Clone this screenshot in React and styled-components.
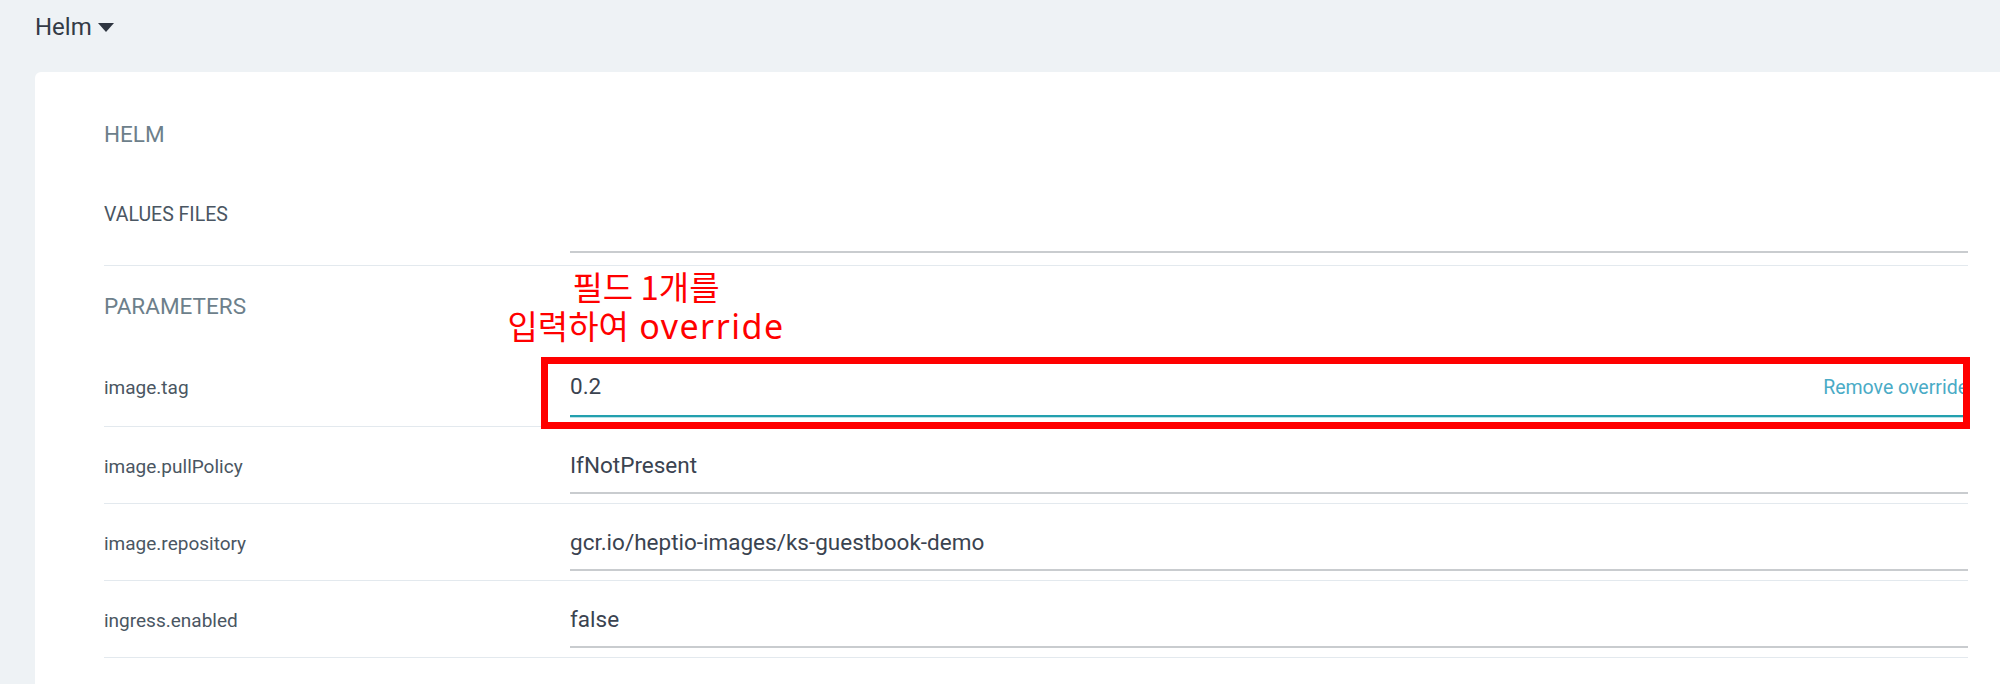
import React from "react";
import styled, { createGlobalStyle } from "styled-components";

const GlobalStyle = createGlobalStyle`
  html, body {
    margin: 0;
    padding: 0;
    overflow: hidden;
    background: #eef2f5;
  }
`;

const Page = styled.div`
  min-height: 100vh;
  background: #eef2f5;
  padding-left: 35px;
  font-family: Roboto, "Liberation Sans", sans-serif;
`;

const Header = styled.div`
  display: flex;
  align-items: center;
  gap: 6px;
  padding-top: 13px;
  font-size: 24px;
  line-height: 28px;
  color: #333a46;
`;

const Card = styled.div`
  margin-top: 31px;
  background: #fff;
  border-radius: 6px 0 0 0;
  padding: 49px 32px 60px 69px;
`;

const SectionTitle = styled.div`
  font-size: 22.5px;
  line-height: 26px;
  color: #6d7f8b;
  padding: ${(p) => p.$pad || "0"};
`;

const Row = styled.div`
  display: grid;
  grid-template-columns: 466px 1fr;
  align-items: ${(p) => (p.$top ? "start" : "baseline")};
  padding: ${(p) => p.$pad};
  border-bottom: 1px solid #e3e9ee;
`;

const Label = styled.div`
  font-size: ${(p) => (p.$caps ? "19.5px" : "19px")};
  line-height: 22px;
  color: #4a5662;
`;

const Field = styled.div`
  position: relative;
  display: flex;
  align-items: baseline;
  justify-content: space-between;
  height: ${(p) => (p.$empty ? "49px" : "auto")};
  box-sizing: border-box;
  padding-bottom: ${(p) => (p.$empty ? "0" : "14px")};
  font-size: 22.5px;
  line-height: 26px;
  color: #3a4350;
  border-bottom: 2px solid ${(p) => (p.$active ? "#23a0ae" : "#c9cccf")};
  box-shadow: ${(p) => (p.$active ? "0 1px 0 rgba(35,160,174,0.3)" : "none")};
`;

const RemoveLink = styled.span`
  font-size: 19.5px;
  color: #4aabc6;
`;

const RedBox = styled.div`
  position: absolute;
  left: -29px;
  right: -2px;
  top: -16px;
  bottom: -14px;
  border: 7px solid #ff0000;
  pointer-events: none;
`;

const Note = styled.div`
  position: absolute;
  left: 76px;
  top: -106px;
  transform: translateX(-50%);
  text-align: center;
  white-space: nowrap;
  font-family: "Noto Sans CJK KR", "Noto Sans", sans-serif;
  font-size: 33px;
  line-height: 39px;
  color: #ff0000;
`;

const Latin = styled.span`
  font-family: "Noto Sans", sans-serif;
  font-size: 34px;
  letter-spacing: 1.5px;
  margin-left: 3px;
`;

const Caret = () => (
  <svg width="16" height="9" viewBox="0 0 16 9">
    <polygon points="0,0 16,0 8,9" fill="#2e3540" />
  </svg>
);

const params = [
  { name: "image.tag", value: "0.2", override: true },
  { name: "image.pullPolicy", value: "IfNotPresent" },
  { name: "image.repository", value: "gcr.io/heptio-images/ks-guestbook-demo" },
  { name: "ingress.enabled", value: "false" },
];

export default function App() {
  return (
    <Page>
      <GlobalStyle />
      <Header>
        Helm <Caret />
      </Header>
      <Card>
        <SectionTitle>HELM</SectionTitle>
        <Row $top $pad="57px 0 12px">
          <Label $caps>VALUES FILES</Label>
          <Field $empty />
        </Row>
        <SectionTitle $pad="27px 0 29px">PARAMETERS</SectionTitle>
        {params.map((p) => (
          <Row key={p.name} $pad="25px 0 9px">
            <Label>{p.name}</Label>
            <Field $active={p.override}>
              <span>{p.value}</span>
              {p.override && <RemoveLink>Remove override</RemoveLink>}
              {p.override && (
                <>
                  <Note>
                    필드 1개를
                    <br />
                    입력하여 <Latin>override</Latin>
                  </Note>
                  <RedBox />
                </>
              )}
            </Field>
          </Row>
        ))}
      </Card>
    </Page>
  );
}
